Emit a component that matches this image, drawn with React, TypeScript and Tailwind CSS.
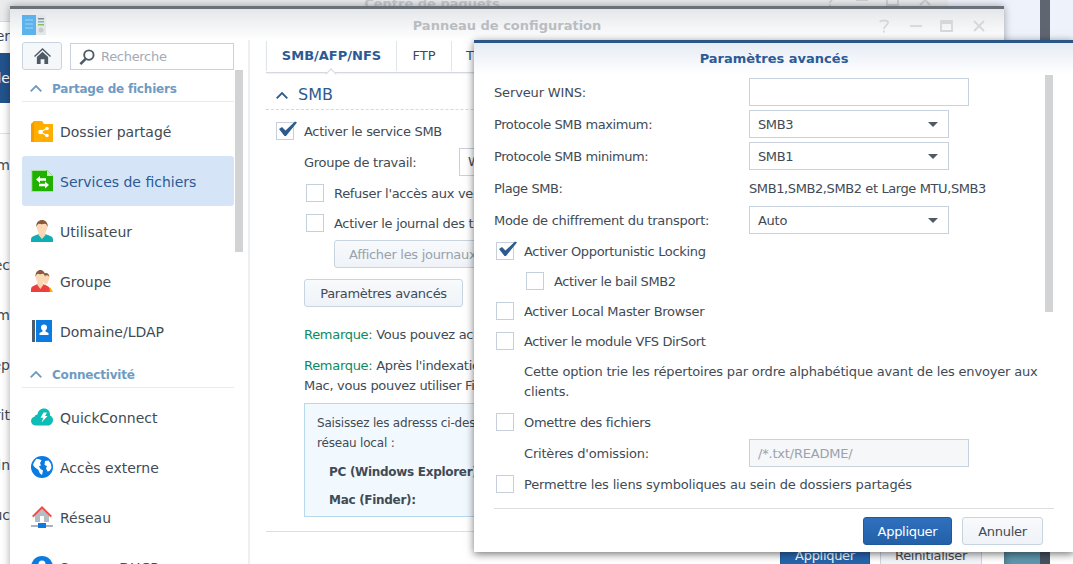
import { ReactNode } from 'react';

const sectionItems = {
  partage: ['Dossier partagé', 'Services de fichiers', 'Utilisateur', 'Groupe', 'Domaine/LDAP'],
  connect: ['QuickConnect', 'Accès externe', 'Réseau', 'Serveur DHCP'],
};

function Person({ shirt, x = 0 }: { shirt: string; x?: number }) {
  return (
    <g transform={`translate(${x} 0)`}>
      <path d="M0 22v-2.5c0-2.5 2-3.4 4.500-4.200L8 14h6l3.500 1.300c2.500.8 4.500 1.700 4.500 4.200V22z" fill={shirt} />
      <path d="M7.500 11h7v4l-3.500 4-3.500-4z" fill="#fbd5ae" />
      <path d="M5.500 6.500C5.500 3 8 .5 11 .5s5.500 2.500 5.500 6c0 3.500-2.500 7-5.500 7s-5.500-3.500-5.500-7z" fill="#fcd9b6" />
      <path d="M5.300 7C4.800 2.500 8 0 11 0s6.200 2.500 5.700 7c-.7-2-1.500-3-2.700-3.300-2 .6-4.500.6-6.200.1C6.800 4.300 5.900 5 5.300 7z" fill="#8a5a3c" />
    </g>
  );
}

function ItemIcon({ name }: { name: string }) {
  const cls = 'h-[22px] w-[22px] shrink-0';
  switch (name) {
    case 'Dossier partagé':
      return (
        <svg viewBox="0 0 22 22" className={cls}>
          <path d="M0 4h3V1h8l2 3h9v18H0z" fill="#ffae00" />
          <path d="M3 1v21H0V4z" fill="#f59a00" />
          <g fill="#fff">
            <circle cx="9.500" cy="12" r="2.300" />
            <circle cx="16" cy="8.500" r="1.800" />
            <circle cx="16" cy="15.500" r="1.800" />
            <path d="M9 11.400l6.500-3.500.5 1-6.500 3.500zM9 12.600l6.500 3.500.5-1-6.500-3.500z" />
          </g>
        </svg>
      );
    case 'Services de fichiers':
      return (
        <svg viewBox="0 0 22 22" className={cls}>
          <path d="M.5 0H16l6 6v16H.5z" fill="#20b100" />
          <path d="M16 0l6 6h-6z" fill="#c6ecbc" />
          <path d="M.5 0H16l-.5.7H1.200v20.600H22v.7H.5z" fill="#fff" opacity=".8" />
          <path d="M5 9.500l4-3.500v2.300h6v2.400H9V13zM18 15l-4 3.500v-2.300H8v-2.400h6V11.500z" fill="#fff" />
        </svg>
      );
    case 'Utilisateur':
      return (
        <svg viewBox="0 0 22 22" className={cls}>
          <Person shirt="#10aeb4" />
        </svg>
      );
    case 'Groupe':
      return (
        <svg viewBox="0 0 22 22" className={cls}>
          <path d="M16 22l3-5 3 5z" fill="#ffae00" />
          <g transform="translate(8 3) scale(.62)">
            <path d="M5.500 6.500C5.500 3 8 .5 11 .5s5.500 2.500 5.500 6-2.500 12-5.500 12-5.500-8.500-5.500-12z" fill="#fcd9b6" />
            <path d="M5.300 7C4.800 2.500 8 0 11 0s6.200 2.500 5.700 7c-.7-2-1.500-3-2.700-3.300-2 .6-4.500.6-6.200.1C6.800 4.300 5.900 5 5.300 7z" fill="#8a5a3c" />
          </g>
          <g transform="translate(0 0) scale(.85 1)">
            <Person shirt="#ee3f3f" />
          </g>
        </svg>
      );
    case 'Domaine/LDAP':
      return (
        <svg viewBox="0 0 22 22" className={cls}>
          <rect x="1" y="0" width="3" height="22" fill="#4f5d6b" />
          <rect x="5" y="0" width="16" height="22" fill="#0a7be0" />
          <circle cx="13" cy="7.500" r="3" fill="#fff" />
          <path d="M11.500 10h3v1.500l3 1.500v2H8.500v-2l3-1.500z" fill="#fff" />
        </svg>
      );
    case 'QuickConnect':
      return (
        <svg viewBox="0 0 22 22" className={cls}>
          <path d="M5 19.500C2 19.500 0 17.500 0 15c0-2.300 1.500-4 3.500-4.300C4 9.500 5 8.500 6.500 8.500 7 5 9.500 2.500 13 2.500c3.500 0 6 2.500 6 6v1c2 1 3 2.500 3 4.500 0 3-2.500 5.500-5 5.500z" fill="#0dbcb5" />
          <path d="M12.500 6.500h3.500l-2 3.500h2.500l-6 6.500 1.800-4.800H9.500z" fill="#fff" />
        </svg>
      );
    case 'Accès externe':
      return (
        <svg viewBox="0 0 22 22" className={cls}>
          <circle cx="11" cy="11" r="11" fill="#0a7be0" />
          <path d="M5.500 2.800c2 .1 3.800.6 5 1.700L9 7l1 2.500-2 .8 1.500 2.700 2.500 1.500-1 4.500c-2-1-3-3-3.500-5L4 11.500 2 9C2.500 6.800 4 4.500 5.500 2.800zM14 5l3.500-.5L20 8l.5 4-2 3-2 .5-1.500-3 1-2.500-2.500-1z" fill="#fff" />
        </svg>
      );
    case 'Réseau':
      return (
        <svg viewBox="0 0 22 22" className={cls}>
          <path d="M4 9.500L11 3l7 6.500V16H4z" fill="#b4bcc6" />
          <path d="M1 10l10-10 10 10-1.500 1.300L11 3 2.500 11.300z" fill="#f24b45" />
          <rect x="9" y="10" width="4" height="6" fill="#fff" />
          <rect x="0" y="19" width="22" height="2" fill="#a9b3bf" />
          <rect x="7" y="17" width="8" height="5" fill="#0a7be0" />
        </svg>
      );
    default:
      return (
        <svg viewBox="0 0 22 22" className={cls}>
          <circle cx="11" cy="11" r="11" fill="#0a7be0" />
          <circle cx="11" cy="8" r="3.500" fill="#fff" />
        </svg>
      );
  }
}

function Chevron({ className }: { className: string }) {
  return (
    <svg viewBox="0 0 12 7" className={className} fill="none" stroke="currentColor" strokeWidth="1.800">
      <path d="M.7 6.300L6 1l5.300 5.300" />
    </svg>
  );
}

function Box({ checked }: { checked?: boolean }) {
  return (
    <span className="relative block h-[18px] w-[18px] shrink-0 border border-[#c5d0dc] bg-white">
      {checked && (
        <svg viewBox="0 0 20 18" className="absolute left-[1px] top-[-3px] h-[18px] w-[20px]">
          <path d="M1 9l3-2 3.500 3.500L17 1.500l2 1L8 16h-1.500z" fill="#2d5b8e" />
        </svg>
      )}
    </span>
  );
}

function CheckRow({ label, checked, className = '' }: { label: string; checked?: boolean; className?: string }) {
  return (
    <div className={`flex items-center gap-[10px] whitespace-nowrap ${className}`}>
      <Box checked={checked} />
      <span className="pt-[1px]">{label}</span>
    </div>
  );
}

function Btn({ children, primary, className = '' }: { children: ReactNode; primary?: boolean; className?: string }) {
  const skin = primary
    ? 'border-[#1f5a9f] bg-gradient-to-b from-[#2f70bd] to-[#2360a8] text-white'
    : 'border-[#c8d4e0] bg-gradient-to-b from-[#f8fafc] to-[#eff3f8] text-[#414b55]';
  return (
    <div className={`flex h-[28px] shrink-0 items-center justify-center rounded-[3px] border pt-[1px] whitespace-nowrap ${skin} ${className}`}>
      {children}
    </div>
  );
}

function Select({ value }: { value: string }) {
  return (
    <div className="flex h-[28px] w-[200px] items-center justify-between border border-[#c8d2de] bg-white pl-[8px] pr-[10px]">
      <span className="pt-[1px]">{value}</span>
      <span className="h-0 w-0 border-x-[5px] border-t-[5px] border-x-transparent border-t-[#4f5a66]" />
    </div>
  );
}

function DialogRow({ label, children, className = '' }: { label: string; children: ReactNode; className?: string }) {
  return (
    <div className={`flex h-[28px] items-center ${className}`}>
      <span className="w-[255px] shrink-0 whitespace-nowrap pt-[1px]">{label}</span>
      {children}
    </div>
  );
}

function SideSection({ title, items }: { title: string; items: string[] }) {
  return (
    <>
      <div className="flex h-[32px] items-center gap-[10px] border-b border-[#e8ebee] pl-[8px] pt-[5px] text-[#6f9bc3]">
        <Chevron className="h-[7px] w-[12px]" />
        <span className="pt-[1px] text-[12px] font-bold tracking-[-0.2px]">{title}</span>
      </div>
      <div className="mt-[4px]">
        {items.map((item) => (
          <div
            key={item}
            className={`flex h-[50px] items-center gap-[7px] rounded-[3px] pl-[9px] text-[14px] tracking-normal ${item === 'Services de fichiers' ? 'bg-[#d5e5f7] text-[#2c5a96]' : ''}`}
          >
            <ItemIcon name={item} />
            <span className="whitespace-nowrap pt-[2px]">{item}</span>
          </div>
        ))}
      </div>
    </>
  );
}

export default function App() {
  return (
    <div className="relative h-[564px] w-[1073px] overflow-hidden bg-[#eef2fb] font-['DejaVu_Sans',Verdana,sans-serif] text-[13px] tracking-[-0.3px] text-[#414b55]">
      {/* window far behind, only an edge shows on the left */}
      <div className="absolute left-0 top-0 h-[564px] w-[10px] overflow-hidden bg-white text-right text-[14px] tracking-normal">
        <div className="h-[21px] bg-[#eceef0]" />
        <div className="flex h-[32px] items-center justify-end border-t border-[#d5dae0] pb-[2px] whitespace-nowrap">er</div>
        <div className="flex h-[50px] items-center justify-end bg-[#23538c] whitespace-nowrap text-white">lle</div>
        <div className="h-[31px] border-b border-[#e0e3e6]" />
        <div className="h-[6px]" />
        {['m', '', 'ec', 'm', 'ep', 'rit', 'ain', 'uc'].map((t, i) => (
          <div key={i} className="flex h-[50px] items-center justify-end whitespace-nowrap">
            {t}
          </div>
        ))}
      </div>

      {/* strip on the right side */}
      <div className="absolute left-[1040px] top-0 h-[40px] w-[10px] bg-[#5f6672]" />
      <div className="absolute left-[1004px] top-[552px] h-[12px] w-[36px] bg-[#5f97ad]" />
      <div className="absolute left-[1040px] top-[552px] h-[12px] w-[10px] bg-[#44525f]" />
      <div className="absolute left-[1050px] top-[552px] h-[12px] w-[23px] bg-white" />

      {/* Centre de paquets */}
      <div className="absolute left-[-84px] top-[-10px] h-[30px] w-[1032px] bg-[#e9ebed] pt-[4px] text-center text-[13px] font-bold tracking-normal text-[#c6c9cd]">
        Centre de paquets
        <svg viewBox="0 0 110 14" className="absolute left-[908px] top-[3px] h-[14px] w-[110px]" fill="none" stroke="#cdd1d5" strokeWidth="2">
          <path d="M2 3c1-2 7-2 8 0s-4 4-4 7M6 11.500v2" />
          <path d="M32 7h12" />
          <path d="M63 2h11v10H63zM63 4h11" />
          <path d="M96 2l10 10M106 2L96 12" />
        </svg>
      </div>

      {/* Panneau de configuration */}
      <div className="absolute left-[10px] top-[6px] h-[600px] w-[994px] border-t-[3px] border-[#6b7178] bg-white shadow-[0_0_8px_rgba(0,0,0,0.35)]">
        <div className="relative flex h-[31px] items-center justify-center bg-gradient-to-b from-[#e4e7ea] to-white pt-[3px] font-bold tracking-normal text-[#b9bdc2]">
          Panneau de configuration
          <svg viewBox="0 0 24 20" className="absolute left-[12px] top-[6px] h-[20px] w-[24px]">
            <rect width="14" height="20" fill="#5cb3ec" />
            <rect x="14" width="10" height="20" fill="#e3e7ea" />
            <rect x="16" y="3" width="6" height="1.500" fill="#7d8a96" />
            <rect x="16" y="6" width="6" height="1.500" fill="#5bc0de" />
            <rect x="16" y="9" width="6" height="1.500" fill="#8cc152" />
            <circle cx="19" cy="15" r="2.500" fill="#c6ccd2" />
            <path d="M3 5h8M3 9h8M3 13h8" stroke="#9ed4f5" strokeWidth="1" />
          </svg>
          <svg viewBox="0 0 110 14" className="absolute left-[868px] top-[10px] h-[14px] w-[110px]" fill="none" stroke="#d5d8db" strokeWidth="1.800">
            <path d="M2 3c1-2 7-2 8 0s-4 4-4 7M6 11.500v2" />
            <path d="M32 7h12" />
            <path d="M63 2h11v10H63zM63 4h11" />
            <path d="M96 2l10 10M106 2L96 12" />
          </svg>
        </div>

        <div className="flex">
          <div className="relative h-[560px] w-[240px] shrink-0 border-r-[2px] border-[#eeeff0] pl-[12px] pr-[14px] pt-[2px]">
            <div className="w-[212px]">
              <div className="flex h-[28px] gap-[8px]">
                <div className="flex w-[40px] items-center justify-center rounded-[3px] border border-[#c8d4e0] bg-[#f5f8fb]">
                  <svg viewBox="0 0 18 17" className="h-[16px] w-[17px]" fill="#4f5a66">
                    <path d="M9 0L0 8.500l1 1L9 2l8 7.500 1-1z" />
                    <path d="M3 9.500L9 4l6 5.500V17h-4v-5H7v5H3z" />
                  </svg>
                </div>
                <div className="mt-[1px] flex flex-1 items-center gap-[6px] border border-[#c8d2de] pl-[8px] text-[#a2abb5]">
                  <svg viewBox="0 0 17 17" className="h-[16px] w-[16px]" fill="none" stroke="#4f5a66" strokeWidth="2">
                    <circle cx="10.500" cy="6.500" r="5" />
                    <path d="M7 10.500L1.500 16" strokeWidth="2.800" />
                  </svg>
                  <span className="pt-[1px]">Recherche</span>
                </div>
              </div>
              <SideSection title="Partage de fichiers" items={sectionItems.partage} />
              <SideSection title="Connectivité" items={sectionItems.connect} />
            </div>
            <div className="absolute left-[225px] top-[30px] h-[182px] w-[8px] bg-[#d2d3d5]" />
          </div>

          <div className="min-w-0 flex-1 pl-[16px] pr-[22px] pt-[2px]">
            <div className="flex h-[31px] items-center border-b border-[#d5d9dd] pb-[3px] shadow-[0_1px_1px_rgba(0,0,0,0.05)]">
              <div className="relative flex h-[30px] w-[131px] items-center justify-center border-x border-[#dfe5eb] font-bold tracking-normal text-[#2c5a96]">
                SMB/AFP/NFS
                <span className="absolute bottom-[-1px] left-[60px] h-[8px] w-[8px] translate-y-[6px] rotate-45 border-l border-t border-[#d5d9dd] bg-white" />
              </div>
              <div className="flex h-[30px] w-[55px] items-center justify-center border-r border-[#dfe5eb] tracking-normal">FTP</div>
              <div className="flex h-[30px] w-[60px] items-center justify-center border-r border-[#dfe5eb] tracking-normal">TFTP</div>
            </div>

            <div className="flex h-[37px] items-center gap-[10px] border-b border-dashed border-[#d5d9dd] pl-[10px] pt-[8px] tracking-normal text-[#2f5a8e]">
              <Chevron className="h-[7px] w-[12px]" />
              <span className="text-[16px]">SMB</span>
            </div>

            <CheckRow label="Activer le service SMB" checked className="mt-[7px] h-[28px] pl-[10px]" />
            <div className="mt-[3px] flex h-[28px] items-center pl-[38px]">
              <span className="w-[155px] shrink-0 pt-[1px]">Groupe de travail:</span>
              <div className="h-[28px] w-[200px] border border-[#c8d2de] pl-[8px] leading-[26px]">WORKGROUP</div>
            </div>
            <CheckRow label="Refuser l'accès aux versions" className="mt-[3px] h-[28px] pl-[40px]" />
            <CheckRow label="Activer le journal des transferts" className="mt-[2px] h-[28px] pl-[40px]" />
            <div className="ml-[68px] mt-[3px] flex">
              <Btn className="w-[180px] justify-start! pl-[14px] text-[#98a2ad]!">Afficher les journaux</Btn>
            </div>
            <div className="ml-[38px] mt-[11px] flex">
              <Btn className="w-[159px]">Paramètres avancés</Btn>
            </div>

            <div className="ml-[38px] mt-[18px] whitespace-nowrap leading-[20px]">
              <span className="text-[#0d8a63]">Remarque:</span> Vous pouvez accéder
            </div>
            <div className="ml-[38px] mt-[11px] whitespace-nowrap leading-[20px]">
              <span className="text-[#0d8a63]">Remarque:</span> Après l'indexation
              <br />
              Mac, vous pouvez utiliser Finder
            </div>

            <div className="ml-[38px] mt-[7px] h-[114px] border border-[#b8d8ec] bg-[#f2f9fe] pl-[12px] pt-[9px] text-[12px] leading-[20px] tracking-[-0.2px]">
              <div className="whitespace-nowrap">Saisissez les adresss ci-dessous</div>
              <div>réseau local :</div>
              <div className="ml-[12px] mt-[5px] flex h-[28px] items-center whitespace-nowrap font-bold tracking-[-0.3px]">PC (Windows Explorer):</div>
              <div className="ml-[12px] flex h-[28px] items-center whitespace-nowrap font-bold tracking-[-0.3px]">Mac (Finder):</div>
            </div>

            <div className="mt-[14px] border-t border-[#dcdfe2]" />
            <div className="mt-[9px] flex justify-end gap-[10px]">
              <Btn primary className="w-[90px]">Appliquer</Btn>
              <Btn className="w-[102px]">Réinitialiser</Btn>
            </div>
          </div>
        </div>
      </div>

      {/* Paramètres avancés */}
      <div className="absolute left-[474px] top-[40px] h-[512px] w-[600px] border-t-[3px] border-[#2a5587] bg-white shadow-[0_2px_8px_rgba(0,0,0,0.55)]">
        <div className="flex h-[32px] items-center justify-center bg-gradient-to-b from-[#e6ecf4] to-white font-bold tracking-normal text-[#2c5a96]">
          Paramètres avancés
        </div>
        <div className="absolute left-[571px] top-[32px] h-[237px] w-[8px] bg-[#d2d3d5]" />

        <div className="px-[20px] pt-[3px]">
          <DialogRow label="Serveur WINS:" className="tracking-[-0.15px]">
            <div className="h-[28px] w-[220px] border border-[#c8d2de] bg-white" />
          </DialogRow>
          <DialogRow label="Protocole SMB maximum:" className="mt-[4px] tracking-[-0.4px]">
            <Select value="SMB3" />
          </DialogRow>
          <DialogRow label="Protocole SMB minimum:" className="mt-[4px] tracking-[-0.4px]">
            <Select value="SMB1" />
          </DialogRow>
          <DialogRow label="Plage SMB:" className="mt-[4px] tracking-[-0.4px]">
            <span className="whitespace-nowrap pt-[1px]">SMB1,SMB2,SMB2 et Large MTU,SMB3</span>
          </DialogRow>
          <DialogRow label="Mode de chiffrement du transport:" className="mt-[4px] tracking-[-0.28px]">
            <Select value="Auto" />
          </DialogRow>

          <CheckRow label="Activer Opportunistic Locking" checked className="mt-[2px] h-[30px] pl-[2px] tracking-[-0.34px]" />
          <CheckRow label="Activer le bail SMB2" className="h-[30px] pl-[32px] tracking-[-0.4px]" />
          <CheckRow label="Activer Local Master Browser" className="h-[30px] pl-[2px]" />
          <CheckRow label="Activer le module VFS DirSort" className="h-[30px] pl-[2px] tracking-[-0.38px]" />
          <p className="mt-[6px] w-[555px] pl-[30px] leading-[20px] tracking-[-0.17px]">
            Cette option trie les répertoires par ordre alphabétique avant de les envoyer aux clients.
          </p>
          <CheckRow label="Omettre des fichiers" className="mt-[5px] h-[30px] pl-[2px]" />
          <div className="mt-[2px] flex h-[28px] items-center pl-[30px] tracking-[-0.2px]">
            <span className="w-[225px] shrink-0 pt-[1px]">Critères d'omission:</span>
            <div className="flex h-[28px] w-[220px] items-center border border-[#c8d2de] bg-[#f5f7f9] pl-[8px] pt-[1px] text-[#9aa3ad]">/*.txt/README/</div>
          </div>
          <CheckRow label="Permettre les liens symboliques au sein de dossiers partagés" className="mt-[2px] h-[30px] pl-[2px] tracking-[-0.17px]" />

          <div className="mt-[9px] w-[560px] border-t border-[#dcdfe2]" />
          <div className="mt-[8px] flex w-[549px] justify-end gap-[10px]">
            <Btn primary className="w-[89px]">Appliquer</Btn>
            <Btn className="w-[81px]">Annuler</Btn>
          </div>
        </div>
      </div>
    </div>
  );
}
